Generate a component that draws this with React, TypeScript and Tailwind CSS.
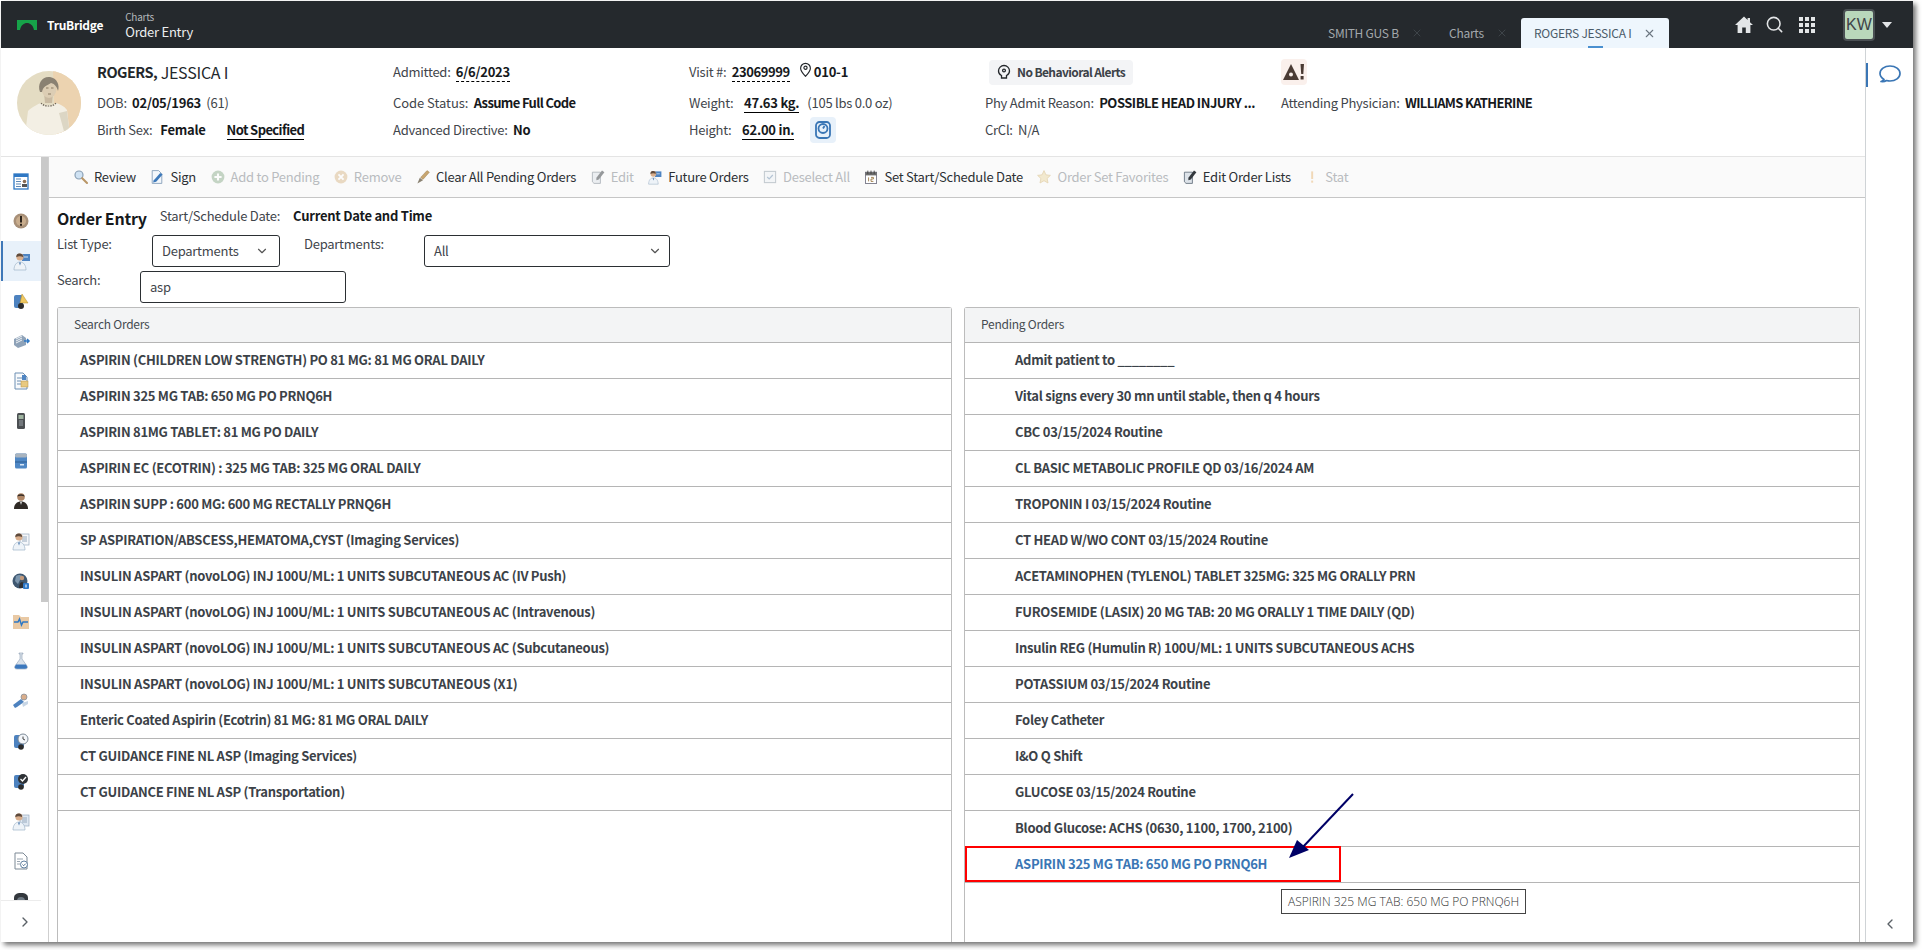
import { ChevronDown, ChevronLeft, ChevronRight, Search, X } from 'lucide-react';
import type { ReactNode } from 'react';

const searchOrders = [
  'ASPIRIN (CHILDREN LOW STRENGTH) PO 81 MG: 81 MG ORAL DAILY',
  'ASPIRIN 325 MG TAB: 650 MG PO PRNQ6H',
  'ASPIRIN 81MG TABLET: 81 MG PO DAILY',
  'ASPIRIN EC (ECOTRIN) : 325 MG TAB: 325 MG ORAL DAILY',
  'ASPIRIN SUPP : 600 MG: 600 MG RECTALLY PRNQ6H',
  'SP ASPIRATION/ABSCESS,HEMATOMA,CYST (Imaging Services)',
  'INSULIN ASPART (novoLOG) INJ 100U/ML: 1 UNITS SUBCUTANEOUS AC (IV Push)',
  'INSULIN ASPART (novoLOG) INJ 100U/ML: 1 UNITS SUBCUTANEOUS AC (Intravenous)',
  'INSULIN ASPART (novoLOG) INJ 100U/ML: 1 UNITS SUBCUTANEOUS AC (Subcutaneous)',
  'INSULIN ASPART (novoLOG) INJ 100U/ML: 1 UNITS SUBCUTANEOUS (X1)',
  'Enteric Coated Aspirin (Ecotrin) 81 MG: 81 MG ORAL DAILY',
  'CT GUIDANCE FINE NL ASP (Imaging Services)',
  'CT GUIDANCE FINE NL ASP (Transportation)',
];

const pendingOrders = [
  'Admit patient to ________',
  'Vital signs every 30 mn until stable, then q 4 hours',
  'CBC 03/15/2024 Routine',
  'CL BASIC METABOLIC PROFILE QD 03/16/2024 AM',
  'TROPONIN I 03/15/2024 Routine',
  'CT HEAD W/WO CONT 03/15/2024 Routine',
  'ACETAMINOPHEN (TYLENOL) TABLET 325MG: 325 MG ORALLY PRN',
  'FUROSEMIDE (LASIX) 20 MG TAB: 20 MG ORALLY 1 TIME DAILY (QD)',
  'Insulin REG (Humulin R) 100U/ML: 1 UNITS SUBCUTANEOUS ACHS',
  'POTASSIUM 03/15/2024 Routine',
  'Foley Catheter',
  'I&O Q Shift',
  'GLUCOSE 03/15/2024 Routine',
  'Blood Glucose: ACHS (0630, 1100, 1700, 2100)',
];

const Svg = ({ children, size = 20, dim = false }: { children: ReactNode; size?: number; dim?: boolean }) => (
  <svg width={size} height={size} viewBox="0 0 20 20" className={dim ? 'shrink-0 opacity-50' : 'shrink-0'}>
    {children}
  </svg>
);

// little people / docs used all over the legacy icon set
const Doctor = () => (
  <>
    <circle cx="8" cy="6" r="3.6" fill="#d9ae8c" />
    <path d="M7 2.6c-2 .3-3 2-2.6 3.6C6 5 9 5 11 6c.6-2-1.6-3.8-4-3.4z" fill="#5e4a3c" />
    <path d="M2 19c0-5 2.600-8 6-8s6 3 6 8z" fill="#eef3f8" stroke="#9fb4c8" strokeWidth=".7" />
    <path d="M7 11.500l1 3 1-3z" fill="#4a78ae" />
  </>
);

const sideIcons: ReactNode[] = [
  <Svg key="0"><rect x="3" y="3" width="14" height="15" fill="#fff" stroke="#2f78c4" strokeWidth="1.300" /><rect x="3" y="3" width="14" height="3" fill="#2f78c4" /><path d="M5 8h5M5 10.500h5M5 13h5M5 15.500h5" stroke="#5f89b5" /><circle cx="13.500" cy="10.500" r="1.800" fill="#8a6d55" /><rect x="11" y="13" width="5" height="3" fill="#555" /></Svg>,
  <Svg key="1"><circle cx="10" cy="10" r="7.500" fill="#a89078" /><circle cx="10" cy="10" r="5" fill="#c9ad8d" /><rect x="9" y="5" width="2" height="6.500" fill="#2d241c" /><rect x="9" y="12.800" width="2" height="2" fill="#2d241c" /></Svg>,
  <Svg key="2"><rect x="10" y="3" width="8" height="7" fill="#4e84c2" /><path d="M12 6h4" stroke="#cfe0f2" /><Doctor /></Svg>,
  <Svg key="3"><rect x="3" y="4" width="9" height="13" rx="2" fill="#4d82bf" /><path d="M11 3l6 9H9z" fill="#f0c860" stroke="#b18a2c" strokeWidth=".5" /><circle cx="10" cy="15" r="3" fill="#2c2c2c" /></Svg>,
  <Svg key="4"><path d="M3 8l8-4 4 3v7l-8 3-4-3z" fill="#8ea2b8" /><path d="M5 8l6-3M5 10l6-3M5 12l6-3" stroke="#eef2f6" /><path d="M13 10h5M16 8l2 2-2 2" stroke="#2f78c4" strokeWidth="1.500" fill="none" /></Svg>,
  <Svg key="5"><path d="M4 2h8l4 4v12H4z" fill="#f8fafc" stroke="#6d8fb3" /><path d="M6 7h6M6 10h4M6 13h4" stroke="#6d8fb3" /><rect x="10" y="10" width="7" height="6" fill="#e8c980" stroke="#b09147" strokeWidth=".5" /><rect x="11" y="4" width="4" height="5" fill="#4e84c2" /></Svg>,
  <Svg key="6"><rect x="6" y="2" width="8" height="16" rx="1.500" fill="#4b4f52" /><rect x="7.500" y="4" width="5" height="4" fill="#9fb4a0" /><path d="M8 10h4M8 12h4M8 14h4" stroke="#9ca3a8" /></Svg>,
  <Svg key="7"><rect x="4" y="2.500" width="12" height="15" rx="1.500" fill="#4f87c4" /><rect x="4" y="2.500" width="12" height="4" rx="1.500" fill="#a9b4bf" /><path d="M4 11h12" stroke="#2d5c91" /><rect x="9" y="13" width="4" height="1.500" fill="#d9e6f3" /></Svg>,
  <Svg key="8"><circle cx="10" cy="6" r="3.800" fill="#b08767" /><path d="M6.300 5.500c.4-2.600 6.400-3.400 7.400 0-2-1-5.400-1-7.400 0z" fill="#2f2a26" /><path d="M3 18c0-5 3-7.500 7-7.500s7 2.500 7 7.500z" fill="#2f2a26" /><path d="M9 11l1 3 1-3z" fill="#d9d9d9" /></Svg>,
  <Svg key="9"><rect x="9" y="3" width="9" height="11" fill="#f5f7fa" stroke="#98aabd" strokeWidth=".7" /><path d="M11 6h5M11 8h5M11 10h5" stroke="#98aabd" /><Doctor /></Svg>,
  <Svg key="10"><circle cx="9" cy="10" r="7.500" fill="#3f5871" /><path d="M5 5c3-2 6-1 7 1l-3 3-2 4-3-3z" fill="#7e97ae" /><circle cx="11" cy="7" r="2.200" fill="#c49a7b" /><path d="M8 17c0-4 1.400-6 3-6s3 2 3 6z" fill="#2e3136" /><rect x="12" y="12" width="6" height="6" rx="1" fill="#2c78c9" /><path d="M15 13.500v3" stroke="#fff" /></Svg>,
  <Svg key="11"><path d="M2 4h6l2 2h8v12H2z" fill="#e9c9a4" /><path d="M3 11h4l1.500-3 2 6 1.500-3h5" stroke="#2f78c4" strokeWidth="1.500" fill="none" /></Svg>,
  <Svg key="12"><path d="M8 2h4v1h-1v5l5 7c1 2 0 3-2 3H6c-2 0-3-1-2-3l5-7V3H8z" fill="#d9e1ea" stroke="#8ea0b3" strokeWidth=".6" /><path d="M5 13.500h10l1 2c.5 1.500-.6 2.200-2 2.200H6c-1.400 0-2.500-.7-2-2.200z" fill="#3c78bd" /></Svg>,
  <Svg key="13"><path d="M2 14l8-6 3 3-7 5-2 1z" fill="#4d82bf" /><circle cx="13" cy="6" r="3" fill="#d9ae8c" stroke="#7d8a97" strokeWidth=".7" /><path d="M11 12l6-2v3l-5 3z" fill="#c8d6e5" /></Svg>,
  <Svg key="14"><rect x="3" y="4" width="10" height="13" rx="2" fill="#4d82bf" /><circle cx="12" cy="8" r="5" fill="#f3f6fa" stroke="#7d8a97" /><path d="M12 5.500V8l2 1" stroke="#444" fill="none" /><circle cx="10" cy="16" r="2.800" fill="#2c2c2c" /></Svg>,
  <Svg key="15"><rect x="3" y="4" width="10" height="13" rx="2" fill="#4d82bf" /><circle cx="12" cy="8" r="5" fill="#2e3236" /><path d="M9.500 8l2 2 3.500-4" stroke="#fff" strokeWidth="1.300" fill="none" /><circle cx="10" cy="16" r="2.800" fill="#2c2c2c" /></Svg>,
  <Svg key="16"><rect x="9" y="4" width="9" height="11" fill="#dfe8f2" stroke="#98aabd" strokeWidth=".7" /><path d="M11 7h5M11 9h5M11 11h5" stroke="#98aabd" /><Doctor /></Svg>,
  <Svg key="17"><path d="M4 2h8l4 4v12H4z" fill="#fff" stroke="#7d8995" /><path d="M6 8h6M6 10.500h3M6 13h3" stroke="#9aa5b0" /><circle cx="13" cy="13.500" r="3.500" fill="#fff" stroke="#5f7f9f" /><path d="M11.500 13.500l1.200 1.200 2-2" stroke="#4a6b8c" fill="none" /></Svg>,
  <Svg key="18"><path d="M3 20V7c0-3 2-5 7-5s7 2 7 5v13z" fill="#33383d" /><circle cx="10" cy="10" r="4" fill="#6f7a84" /></Svg>,
];

const ToolIcons: Record<string, ReactNode> = {
  review: <><circle cx="7.500" cy="7.500" r="5" fill="#cfe2f3" stroke="#8aa0b5" strokeWidth="1.500" /><path d="M11.500 11.500l6 6" stroke="#b99667" strokeWidth="2.600" strokeLinecap="round" /></>,
  sign: <><path d="M4 2h8l4 4v12H4z" fill="#f3f7fb" stroke="#7a95b2" /><path d="M6 14L14 5l3 2-8 9-4 1z" fill="#3d79ba" /></>,
  add: <><circle cx="10" cy="10" r="8" fill="#8fb08f" /><path d="M10 5.500v9M5.500 10h9" stroke="#fff" strokeWidth="2.600" /></>,
  remove: <><circle cx="10" cy="10" r="8" fill="#dab98c" /><path d="M6.800 6.800l6.400 6.400M13.200 6.800l-6.400 6.400" stroke="#fff" strokeWidth="2.400" /></>,
  clear: <><path d="M3 18l3-7 4 3z" fill="#8a8272" /><path d="M7 10.500L15 2l3 2-8 9z" fill="#c8a671" stroke="#917547" strokeWidth=".5" /></>,
  edit: <><path d="M3 4h10v14H5l-2-2z" fill="#dde3e9" stroke="#596673" /><path d="M8 11l7-9 3 2-7 9-3 1z" fill="#33383d" /></>,
  future: <><rect x="10" y="3" width="8" height="7" fill="#4e84c2" /><path d="M12 6h4" stroke="#cfe0f2" /><Doctor /></>,
  deselect: <><rect x="3" y="3" width="14" height="14" fill="#eef2f6" stroke="#8f9ca8" strokeWidth="1.300" /><path d="M6.500 10l2.500 2.500 4.500-5" stroke="#6f8faf" strokeWidth="1.500" fill="none" /></>,
  calendar: <><rect x="3" y="4" width="14" height="14" fill="#fff" stroke="#667" /><rect x="3" y="4" width="14" height="4" fill="#6a6a6a" /><path d="M6 2v4M10 2v4M14 2v4" stroke="#333" /><path d="M7 10.500v5M10 10.500h3v2h-3v3h3" stroke="#8f6a2f" fill="none" /></>,
  star: <path d="M10 2l2.400 5.300 5.600.7-4.100 3.800 1.100 5.700L10 14.600 5 17.500l1.100-5.700L2 8l5.600-.7z" fill="#ecd9a6" stroke="#cfae6a" />,
  stat: <><rect x="9" y="3" width="2.400" height="9.500" fill="#e9b877" /><rect x="9" y="14.500" width="2.400" height="2.600" fill="#e9b877" /></>,
};

const toolbar = [
  { icon: 'review', label: 'Review' },
  { icon: 'sign', label: 'Sign' },
  { icon: 'add', label: 'Add to Pending', off: true },
  { icon: 'remove', label: 'Remove', off: true },
  { icon: 'clear', label: 'Clear All Pending Orders' },
  { icon: 'edit', label: 'Edit', off: true },
  { icon: 'future', label: 'Future Orders' },
  { icon: 'deselect', label: 'Deselect All', off: true },
  { icon: 'calendar', label: 'Set Start/Schedule Date' },
  { icon: 'star', label: 'Order Set Favorites', off: true },
  { icon: 'edit', label: 'Edit Order Lists' },
  { icon: 'stat', label: 'Stat', off: true },
];

const Row = ({ className = '', children }: { className?: string; children: ReactNode }) => (
  <div className={`flex h-[26px] items-center whitespace-nowrap text-[13px] text-[#3f454b] ${className}`}>{children}</div>
);

const Val = ({ className = '', children }: { className?: string; children: ReactNode }) => (
  <span className={`font-bold text-[#16191c] ${className}`}>{children}</span>
);

const Panel = ({ title, indent, rows, children }: { title: string; indent: string; rows: string[]; children?: ReactNode }) => (
  <div className="flex min-w-0 flex-col rounded-t-[3px] border border-b-0 border-[#bcbcbc]">
    <div className="flex h-[35px] shrink-0 items-center border-b border-[#b5b5b5] bg-[#f3f4f5] pb-[2px] pl-4 text-[12px] text-[#454b51]">{title}</div>
    {rows.map((r) => (
      <div key={r} className={`flex h-9 shrink-0 items-center border-b border-[#b5b5b5] pb-[2px] text-[13px] font-bold tracking-[-0.28px] text-[#3c4248] ${indent}`}>
        {r}
      </div>
    ))}
    {children}
  </div>
);

export default function App() {
  return (
    <div className="relative h-[950px] w-[1922px] overflow-hidden bg-white font-['Noto_Sans_CJK_SC','Liberation_Sans',sans-serif] tracking-[-0.25px]">
      <div className="ml-px mt-px flex h-[941px] w-[1912px] flex-col bg-white shadow-[3px_3px_5px_rgba(0,0,0,0.55)]">
        {/* top bar */}
        <header className="flex h-[47px] shrink-0 items-stretch bg-[#25292d]">
          <div className="flex items-center pl-4">
            <svg width="20" height="10" viewBox="0 0 20 10">
              <path d="M0 0h20v10h-3C16 5 13 3 10 3S4 5 3 10H0z" fill="#16a349" />
            </svg>
            <span className="ml-[10px] text-[12px] font-bold text-white">TruBridge</span>
          </div>
          <div className="ml-[22px] flex flex-col justify-center leading-none">
            <span className="text-[10px] text-[#b4b8bb]">Charts</span>
            <span className="mt-[3px] text-[13px] text-[#eceeef]">Order Entry</span>
          </div>
          <div className="ml-auto flex items-end text-[12px]">
            <div className="flex h-[30px] w-[121px] items-center text-[#a3a8ac]">
              SMITH GUS B
              <X size={12} className="ml-3 text-[#3e4449]" />
            </div>
            <div className="flex h-[30px] w-[72px] items-center text-[#a3a8ac]">
              Charts
              <X size={12} className="ml-3 text-[#3e4449]" />
            </div>
            <div className="relative flex h-[30px] w-[148px] items-center rounded-t-[3px] bg-[#eef6fd] pl-[13px] text-[#4b5b69]">
              ROGERS JESSICA I
              <X size={13} className="ml-3 text-[#6b7680]" />
              <span className="absolute bottom-0 left-[67px] h-0.5 w-[15px] bg-[#4a90d0]" />
            </div>
            <div className="flex h-[47px] w-[244px] items-center pl-[65px] text-[#e3e5e7]">
              <svg width="20" height="20" viewBox="0 0 20 20" fill="currentColor">
                <path d="M10 1.500L1 10h2.600v8h4.600v-5.500h3.600V18h4.600v-8H19l-3-2.800V3h-2.400v2z" />
              </svg>
              <Search size={19} className="ml-[11px]" />
              <svg width="16" height="16" viewBox="0 0 16 16" fill="currentColor" className="ml-[15px]">
                <path d="M0 0h4v4H0zM6 0h4v4H6zM12 0h4v4h-4zM0 6h4v4H0zM6 6h4v4H6zM12 6h4v4h-4zM0 12h4v4H0zM6 12h4v4H6zM12 12h4v4h-4z" />
              </svg>
              <div className="ml-[28px] flex h-8 w-8 items-center justify-center rounded-[4px] border-2 border-[#4a4f53] bg-[#b9d7bb] font-['Liberation_Sans',sans-serif] text-[16px] tracking-normal text-[#3f4347]">
                KW
              </div>
              <svg width="10" height="6" viewBox="0 0 10 6" fill="currentColor" className="ml-[7px]">
                <path d="M0 0h10L5 6z" />
              </svg>
            </div>
          </div>
        </header>

        <div className="flex min-h-0 flex-1">
          <div className="flex min-w-0 flex-1 flex-col">
            {/* patient banner */}
            <section className="flex h-[109px] shrink-0 border-b border-[#e4e4e4]">
              <div className="w-[96px] shrink-0 pl-4 pt-[23px]">
                <svg width="64" height="64" viewBox="0 0 64 64" className="rounded-full">
                  <rect width="64" height="64" fill="#e4dcc3" />
                  <path d="M36 0h28v64H38z" fill="#ecd3b0" />
                  <path d="M8 64l3-24c4-4 10-7 13-8 4 3 11 3 15 0 4 1 8 3 11 7l3 25z" fill="#f3efe4" />
                  <path d="M42 42l6 22h5l-3-24z" fill="#dcd6c4" />
                  <path d="M27 22h9l-1 10h-7z" fill="#c9baa2" />
                  <ellipse cx="32" cy="18" rx="7.500" ry="9" fill="#dccdb4" />
                  <path d="M23 21c-3-8 2-16 10-15 7 1 10 8 8 14-1-4-3-7-7-8-3 2-8 3-9 9z" fill="#8a8172" />
                  <path d="M24 32c3 4 12 4 15 0" stroke="#6a6050" strokeWidth="1.200" strokeDasharray="1.500 1" fill="none" />
                  <path d="M29 17h2.500M34 17h2.500M31 23h3" stroke="#8a7a62" />
                </svg>
              </div>
              <div className="w-[296px] shrink-0 pt-[11px]">
                <div className="flex h-[26px] items-center whitespace-nowrap text-[16px] text-[#23272b]">
                  <span className="text-[14.500px] font-bold tracking-[-0.5px]">ROGERS,</span>&nbsp;JESSICA I
                </div>
                <Row className="mt-[5px]">
                  DOB:&nbsp;&nbsp;<Val>02/05/1963</Val>&nbsp;&nbsp;(61)
                </Row>
                <Row className="mt-px">
                  Birth Sex:&nbsp;&nbsp;&nbsp;<Val>Female</Val>
                  <Val className="ml-[21px] border-b border-black leading-[19px] tracking-[-0.6px]">Not Specified</Val>
                </Row>
              </div>
              <div className="w-[296px] shrink-0 pt-[11px]">
                <Row>
                  Admitted:&nbsp;&nbsp;<Val className="border-b border-dashed border-black leading-[19px]">6/6/2023</Val>
                </Row>
                <Row className="mt-[5px]">
                  <span className="tracking-[-0.05px]">Code Status:</span>&nbsp;&nbsp;<Val className="tracking-[-0.65px]">Assume Full Code</Val>
                </Row>
                <Row className="mt-px">
                  Advanced Directive:&nbsp;&nbsp;<Val>No</Val>
                </Row>
              </div>
              <div className="w-[296px] shrink-0 pt-[11px]">
                <Row>
                  Visit #:&nbsp;&nbsp;<Val className="border-b border-dashed border-black leading-[19px] tracking-[-0.4px]">23069999</Val>
                  <svg width="13" height="16" viewBox="0 0 14 18" fill="none" stroke="#23272b" strokeWidth="1.300" className="mb-1 ml-[9px]">
                    <path d="M7 16C3 12 1.500 9.500 1.500 7a5.500 5.500 0 0 1 11 0c0 2.500-1.500 5-5.500 9z" />
                    <circle cx="7" cy="6.500" r="1.800" />
                  </svg>
                  <Val className="ml-0.5">010-1</Val>
                </Row>
                <Row className="mt-[5px]">
                  Weight:&nbsp;&nbsp;&nbsp;&nbsp;<Val className="border-b border-black leading-[19px]">47.63 kg.</Val>&nbsp;&nbsp;&nbsp;(105 lbs 0.0 oz)
                </Row>
                <Row className="mt-px">
                  Height:&nbsp;&nbsp;&nbsp;&nbsp;<Val className="border-b border-black leading-[19px]">62.00 in.</Val>
                  <span className="ml-4 flex h-[26px] w-[26px] items-center justify-center rounded-[4px] bg-[#e8f1fa]">
                    <svg width="18" height="20" viewBox="0 0 18 20" fill="none" stroke="#3a76b5" strokeWidth="1.800">
                      <rect x="2" y="2" width="14" height="16" rx="3.500" />
                      <circle cx="9" cy="8.500" r="4.500" />
                      <path d="M9 8.500l1.500-2.500" />
                    </svg>
                  </span>
                </Row>
              </div>
              <div className="w-[296px] shrink-0 pt-[11px]">
                <Row>
                  <div className="ml-1 flex h-[25px] items-center rounded-[4px] bg-[#f3f4f6] px-2 text-[12px] font-bold tracking-[-0.6px] text-[#3c4248]">
                    <svg width="14" height="16" viewBox="0 0 14 16" fill="none" stroke="#23272b" strokeWidth="1.300" className="mr-1.5">
                      <path d="M4.500 14v-2.500C2.500 10.500 1.500 8.800 1.500 7a5.500 5.500 0 0 1 11 0c0 1.800-1 3.500-3 4.500V14z" />
                      <circle cx="7" cy="6.500" r="1.400" />
                    </svg>
                    No Behavioral Alerts
                  </div>
                </Row>
                <Row className="mt-[5px]">
                  Phy Admit Reason:&nbsp;&nbsp;<Val className="tracking-[-0.5px]">POSSIBLE HEAD INJURY ...</Val>
                </Row>
                <Row className="mt-px">CrCl:&nbsp;&nbsp;N/A</Row>
              </div>
              <div className="flex-1 pt-[11px]">
                <Row>
                  <span className="flex h-[26px] w-[26px] items-center justify-center rounded-[4px] bg-[#faf0ec]">
                    <svg width="22" height="18" viewBox="0 0 22 18" fill="#4a3b34">
                      <path d="M8 1l8 16H0z" />
                      <path d="M17.500 1h3.500l-.7 10h-2.100zM17.600 13h3v3.500h-3z" />
                      <circle cx="8" cy="11.500" r="2" fill="#faf0ec" />
                    </svg>
                  </span>
                </Row>
                <Row className="mt-[5px]">
                  Attending Physician:&nbsp;&nbsp;<Val className="tracking-[-0.65px]">WILLIAMS KATHERINE</Val>
                </Row>
              </div>
            </section>

            <div className="flex min-h-0 flex-1">
              {/* left nav */}
              <nav className="relative flex w-[40px] shrink-0 flex-col overflow-hidden">
                <div className="flex h-[743px] flex-col overflow-hidden pt-[4px]">
                  {sideIcons.map((icon, i) => (
                    <div
                      key={i}
                      className={`flex h-10 shrink-0 items-center justify-center ${i === 2 ? 'border-l-2 border-[#3f78b8] bg-[#e8f1fa]' : ''}`}
                    >
                      {icon}
                    </div>
                  ))}
                </div>
                <div className="flex flex-1 items-center justify-center border-t border-[#ececec] pl-2 text-[#5a6066]">
                  <ChevronRight size={16} />
                </div>
              </nav>
              <div className="w-[8px] shrink-0 border-r border-[#cfcfcf]">
                <div className="h-[445px] w-[7px] bg-[#c9c9c9]" />
              </div>

              <main className="flex min-w-0 flex-1 flex-col">
                <div className="flex h-[41px] shrink-0 items-center gap-[13.500px] border-b border-[#c6c6c6] bg-[#fafafa] pl-6 text-[13px] text-[#2c3034]">
                  {toolbar.map((t) => (
                    <div key={t.label} className={`flex items-center gap-[5px] whitespace-nowrap ${t.off ? 'text-[#b9bcbf]' : ''}`}>
                      <Svg size={16} dim={t.off}>{ToolIcons[t.icon]}</Svg>
                      {t.label}
                    </div>
                  ))}
                </div>

                <div className="flex h-[37px] shrink-0 items-center whitespace-nowrap pl-2 text-[13px] text-[#3f454b]">
                  <span className="translate-y-px text-[16px] font-bold text-[#16191c]">Order Entry</span>
                  <span className="ml-[13px] -translate-y-px">Start/Schedule Date:</span>
                  <span className="ml-[13px] -translate-y-px font-bold text-[#16191c]">Current Date and Time</span>
                </div>
                <div className="flex h-8 shrink-0 whitespace-nowrap pl-2 text-[13px] text-[#3f454b]">
                  <span className="w-[95px] -translate-y-px">List Type:</span>
                  <div className="flex h-8 w-[128px] items-center justify-between rounded-[3px] border border-[#2b2f33] pl-[9px] pr-[10px]">
                    Departments
                    <ChevronDown size={14} className="text-[#555]" />
                  </div>
                  <span className="ml-6 w-[120px] -translate-y-px">Departments:</span>
                  <div className="flex h-8 w-[246px] items-center justify-between rounded-[3px] border border-[#2b2f33] pl-[9px] pr-[7px]">
                    All
                    <ChevronDown size={14} className="text-[#555]" />
                  </div>
                </div>
                <div className="mt-1 flex h-8 shrink-0 whitespace-nowrap pl-2 text-[13px] text-[#3f454b]">
                  <span className="w-[83px] -translate-y-px">Search:</span>
                  <div className="flex h-8 w-[206px] items-center rounded-[3px] border border-[#2b2f33] pl-[9px]">asp</div>
                </div>

                <div className="ml-2 mt-1 grid min-h-0 w-[1803px] flex-1 grid-cols-[895px_896px] gap-[12px]">
                  <Panel title="Search Orders" indent="pl-[22px]" rows={searchOrders} />
                  <Panel title="Pending Orders" indent="pl-[50px]" rows={pendingOrders}>
                    <div className="flex h-9 shrink-0 items-center border-b border-[#b5b5b5] pb-[2px] pl-[50px] text-[13px] font-bold tracking-[-0.28px] text-[#3a76b5]">
                      ASPIRIN 325 MG TAB: 650 MG PO PRNQ6H
                    </div>
                  </Panel>
                </div>
              </main>
            </div>
          </div>

          {/* right rail */}
          <aside className="relative flex w-[48px] shrink-0 flex-col items-center border-l border-[#cfd3d6] pt-[14px]">
            <span className="absolute left-0 top-[15px] h-6 w-0.5 bg-[#3a76b5]" />
            <svg width="24" height="24" viewBox="0 0 24 24" fill="none" stroke="#3a76b5" strokeWidth="1.700" strokeLinejoin="round">
              <path d="M3 19.500c1.600-.4 2.400-1 3-2C3.800 16 2 14 2 11.500 2 7.300 6.500 4 12 4s10 3.300 10 7.500S17.500 19 12 19c-1.200 0-2.400-.2-3.500-.5-1.500 1-3.400 1.300-5.500 1z" />
            </svg>
            <ChevronLeft size={16} className="mt-auto mb-[10px] text-[#5a6066]" />
          </aside>
        </div>
      </div>

      {/* screenshot annotations */}
      <div className="absolute left-[965px] top-[846px] h-9 w-[376px] border-2 border-[#ff0000]" />
      <div className="absolute left-[1281px] top-[889px] flex h-[25px] w-[245px] items-center justify-center border border-[#444] bg-white font-['Open_Sans',sans-serif] text-[12px] font-light tracking-normal text-[#333]">
        ASPIRIN 325 MG TAB: 650 MG PO PRNQ6H
      </div>
      <svg className="absolute left-[1280px] top-[790px]" width="80" height="72" viewBox="0 0 80 72">
        <path d="M73 4L22 58" stroke="#000066" strokeWidth="2" />
        <path d="M9 68l8-18 12 10z" fill="#000066" />
      </svg>
    </div>
  );
}
